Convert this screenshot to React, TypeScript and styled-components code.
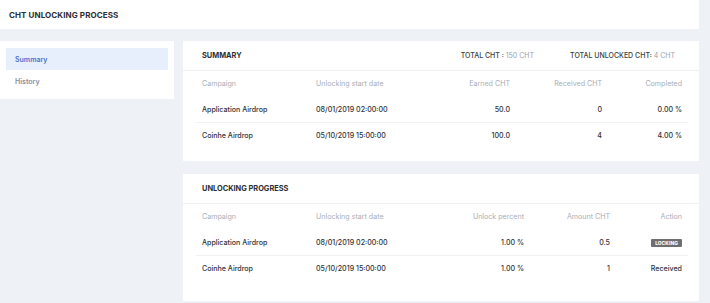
import styled, { createGlobalStyle } from "styled-components";

const GlobalStyle = createGlobalStyle`
  html, body {
    margin: 0;
    padding: 0;
    background: #eef1f5;
  }
  body {
    font-family: Inter, "Liberation Sans", sans-serif;
    color: #2f3238;
    -webkit-font-smoothing: antialiased;
  }
`;

const Page = styled.div`
  width: 699px;
  min-height: 303px;
`;

const TopBar = styled.header`
  height: 29px;
  background: #ffffff;
  padding-left: 9px;
  display: flex;
  align-items: center;
  font-size: 8px;
  font-weight: 700;
  letter-spacing: 0.1px;
  color: #2b2e33;
`;

const Body = styled.div`
  display: flex;
  align-items: flex-start;
  gap: 9px;
  padding-top: 12px;
`;

const Sidebar = styled.nav`
  width: 174px;
  box-sizing: border-box;
  background: #ffffff;
  padding: 7px 6px;
  display: flex;
  flex-direction: column;
`;

const NavItem = styled.div<{ $active?: boolean }>`
  height: 22px;
  display: flex;
  align-items: center;
  padding-left: 9px;
  font-size: 7px;
  font-weight: 600;
  color: ${(p) => (p.$active ? "#4d72cf" : "#8991a0")};
  background: ${(p) => (p.$active ? "#e8effc" : "transparent")};
`;

const Main = styled.main`
  flex: 1;
  display: flex;
  flex-direction: column;
  gap: 13px;
`;

const Card = styled.section<{ $bottom: number }>`
  background: #ffffff;
  padding-bottom: ${(p) => p.$bottom}px;
`;

const CardHead = styled.div`
  height: 29px;
  border-bottom: 1px solid #eef0f3;
  display: flex;
  align-items: center;
  padding: 0 24px 0 19px;
`;

const CardTitle = styled.h2`
  margin: 0;
  flex: 1;
  font-size: 7.4px;
  font-weight: 700;
  color: #2b2e33;
`;

const Totals = styled.div`
  display: flex;
  gap: 36px;
  font-size: 7px;
  font-weight: 500;
  color: #3a3d42;
`;

const TotalValue = styled.span`
  color: #9aa2ad;
  font-weight: 400;
`;

const Table = styled.div<{ $cols: string }>`
  margin: 0 11px 0 13px;
  display: grid;
  grid-template-columns: ${(p) => p.$cols};
`;

const Row = styled.div<{ $head?: boolean; $line?: boolean }>`
  display: contents;
  & > div {
    height: 26px;
    color: ${(p) => (p.$head ? "#a9aeb6" : "#2f3238")};
    font-weight: ${(p) => (p.$head ? 400 : 500)};
    border-bottom: 1px solid ${(p) => (p.$line ? "#f0f1f4" : "transparent")};
  }
`;

const Cell = styled.div<{ $right?: boolean }>`
  box-sizing: border-box;
  display: flex;
  align-items: center;
  justify-content: ${(p) => (p.$right ? "flex-end" : "flex-start")};
  padding: 0 6px;
  font-size: 7.1px;
  white-space: nowrap;
`;

const Badge = styled.span`
  display: inline-flex;
  align-items: center;
  justify-content: center;
  width: 31px;
  height: 8px;
  border-radius: 1px;
  background: #6f6f71;
  color: #ffffff;
  font-size: 4.8px;
  font-weight: 800;
  letter-spacing: 0.1px;
`;

type Col = { label: string; right?: boolean };

const summaryCols: Col[] = [
  { label: "Campaign" },
  { label: "Unlocking start date" },
  { label: "Earned CHT", right: true },
  { label: "Received CHT", right: true },
  { label: "Completed", right: true },
];

const summaryRows = [
  ["Application Airdrop", "08/01/2019 02:00:00", "50.0", "0", "0.00 %"],
  ["Coinhe Airdrop", "05/10/2019 15:00:00", "100.0", "4", "4.00 %"],
];

const progressCols: Col[] = [
  { label: "Campaign" },
  { label: "Unlocking start date" },
  { label: "Unlock percent", right: true },
  { label: "Amount CHT", right: true },
  { label: "Action", right: true },
];

const progressRows = [
  ["Application Airdrop", "08/01/2019 02:00:00", "1.00 %", "0.5", "LOCKING"],
  ["Coinhe Airdrop", "05/10/2019 15:00:00", "1.00 %", "1", "Received"],
];

function DataTable({ cols, rows, template }: { cols: Col[]; rows: string[][]; template: string }) {
  return (
    <Table $cols={template}>
      <Row $head>
        {cols.map((c) => (
          <Cell key={c.label} $right={c.right}>
            {c.label}
          </Cell>
        ))}
      </Row>
      {rows.map((r, i) => (
        <Row key={i} $line={i < rows.length - 1}>
          {r.map((v, j) => (
            <Cell key={j} $right={cols[j].right}>
              {v === "LOCKING" ? <Badge>LOCKING</Badge> : v}
            </Cell>
          ))}
        </Row>
      ))}
    </Table>
  );
}

export default function App() {
  return (
    <Page>
      <GlobalStyle />
      <TopBar>CHT UNLOCKING PROCESS</TopBar>
      <Body>
        <Sidebar>
          <NavItem $active>Summary</NavItem>
          <NavItem>History</NavItem>
        </Sidebar>
        <Main>
          <Card $bottom={12}>
            <CardHead>
              <CardTitle>SUMMARY</CardTitle>
              <Totals>
                <span>
                  TOTAL CHT : <TotalValue>150 CHT</TotalValue>
                </span>
                <span>
                  TOTAL UNLOCKED CHT: <TotalValue>4 CHT</TotalValue>
                </span>
              </Totals>
            </CardHead>
            <DataTable
              cols={summaryCols}
              rows={summaryRows}
              template="114px 110px 96px 92px 1fr"
            />
          </Card>
          <Card $bottom={19}>
            <CardHead>
              <CardTitle>UNLOCKING PROGRESS</CardTitle>
            </CardHead>
            <DataTable
              cols={progressCols}
              rows={progressRows}
              template="114px 110px 110px 86px 1fr"
            />
          </Card>
        </Main>
      </Body>
    </Page>
  );
}
